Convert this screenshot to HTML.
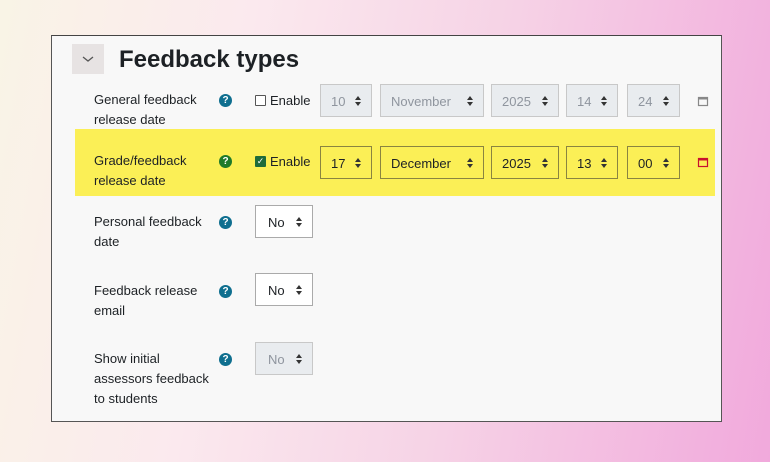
<!DOCTYPE html><html><head><style>
body{margin:0;width:770px;height:462px;overflow:hidden;font-family:"Liberation Sans",sans-serif;
background:linear-gradient(100deg,#f9f4e6 0%,#fbe9ee 30%,#f6d3e6 60%,#f1a9dc 100%);position:relative}
.p{position:absolute;left:51px;top:35px;width:669px;height:385px;background:#f8f8f8;border:1px solid #555;border-top:1px solid #444}
.a{position:absolute}
.tg{left:72px;top:44px;width:32px;height:30px;background:#e7e3e3}
h1{position:absolute;left:119px;top:46px;margin:0;font-size:24px;font-weight:bold;color:#1d2125}
.l{position:absolute;left:94px;font-size:13px;line-height:20px;color:#1d2125}
.q{position:absolute;width:13px;height:13px;border-radius:50%;background:#0f6f8f;color:#fff;font-size:10px;font-weight:bold;text-align:center;line-height:13px}
.s{position:absolute;height:33px;border:1px solid #aaa;box-sizing:border-box;font-size:13px;line-height:33px;padding-left:10px;color:#1d2125;background:#fff}
.s:after{content:"";position:absolute;right:10px;top:11px;width:0;height:0;border:3.5px solid transparent;border-bottom:4px solid #333;border-top:0}
.s:before{content:"";position:absolute;right:10px;top:17px;width:0;height:0;border:3.5px solid transparent;border-top:4px solid #333;border-bottom:0}
.d{background:#e9ecef;color:#8f959e;border-color:#c8c8c8}
.y{background:#fbef56;border-color:#8a8440}
.hl{left:75px;top:129px;width:640px;height:67px;background:#fbef56}
.cb{position:absolute;width:9px;height:9px;border:1px solid #555;background:#fff;border-radius:1px}
.en{position:absolute;font-size:13px;color:#1d2125}
</style></head><body>
<div class="p"></div>
<div class="a tg"><svg width="32" height="30"><path d="M11 13l5 4 5-4" stroke="#555" stroke-width="1.3" fill="none"/></svg></div>
<h1>Feedback types</h1>
<div class="l" style="top:90px">General feedback<br>release date</div>
<div class="q" style="left:219px;top:94px">?</div>
<div class="cb" style="left:255px;top:95px"></div><div class="en" style="left:270px;top:93px">Enable</div>
<div class="s d" style="left:320px;top:84px;width:52px">10</div>
<div class="s d" style="left:380px;top:84px;width:104px">November</div>
<div class="s d" style="left:491px;top:84px;width:68px">2025</div>
<div class="s d" style="left:566px;top:84px;width:52px">14</div>
<div class="s d" style="left:627px;top:84px;width:53px">24</div>
<svg class="a" style="left:697px;top:95px" width="12" height="12"><rect x="1.5" y="2.5" width="9" height="8" fill="none" stroke="#888" stroke-width="1.2"/><rect x="1" y="2" width="10" height="2.5" fill="#888"/></svg>
<div class="a hl"></div>
<div class="l" style="top:151px">Grade/feedback<br>release date</div>
<div class="q" style="left:219px;top:155px;background:#1e7a2a">?</div>
<div class="cb" style="left:255px;top:156px;background:#1e6b3a;border-color:#1e6b3a;color:#fff;font-size:9px;line-height:9px;text-align:center">✓</div><div class="en" style="left:270px;top:154px">Enable</div>
<div class="s y" style="left:320px;top:146px;width:52px">17</div>
<div class="s y" style="left:380px;top:146px;width:104px">December</div>
<div class="s y" style="left:491px;top:146px;width:68px">2025</div>
<div class="s y" style="left:566px;top:146px;width:52px">13</div>
<div class="s y" style="left:627px;top:146px;width:53px">00</div>
<svg class="a" style="left:697px;top:156px" width="12" height="12"><rect x="1.5" y="2.5" width="9" height="8" fill="none" stroke="#c8102e" stroke-width="1.2"/><rect x="1" y="2" width="10" height="2.5" fill="#c8102e"/></svg>
<div class="l" style="top:212px">Personal feedback<br>date</div>
<div class="q" style="left:219px;top:216px">?</div>
<div class="s" style="left:255px;top:205px;width:58px;padding-left:12px">No</div>
<div class="l" style="top:281px">Feedback release<br>email</div>
<div class="q" style="left:219px;top:285px">?</div>
<div class="s" style="left:255px;top:273px;width:58px;padding-left:12px">No</div>
<div class="l" style="top:349px">Show initial<br>assessors feedback<br>to students</div>
<div class="q" style="left:219px;top:353px">?</div>
<div class="s d" style="left:255px;top:342px;width:58px;padding-left:12px">No</div>
</body></html>
